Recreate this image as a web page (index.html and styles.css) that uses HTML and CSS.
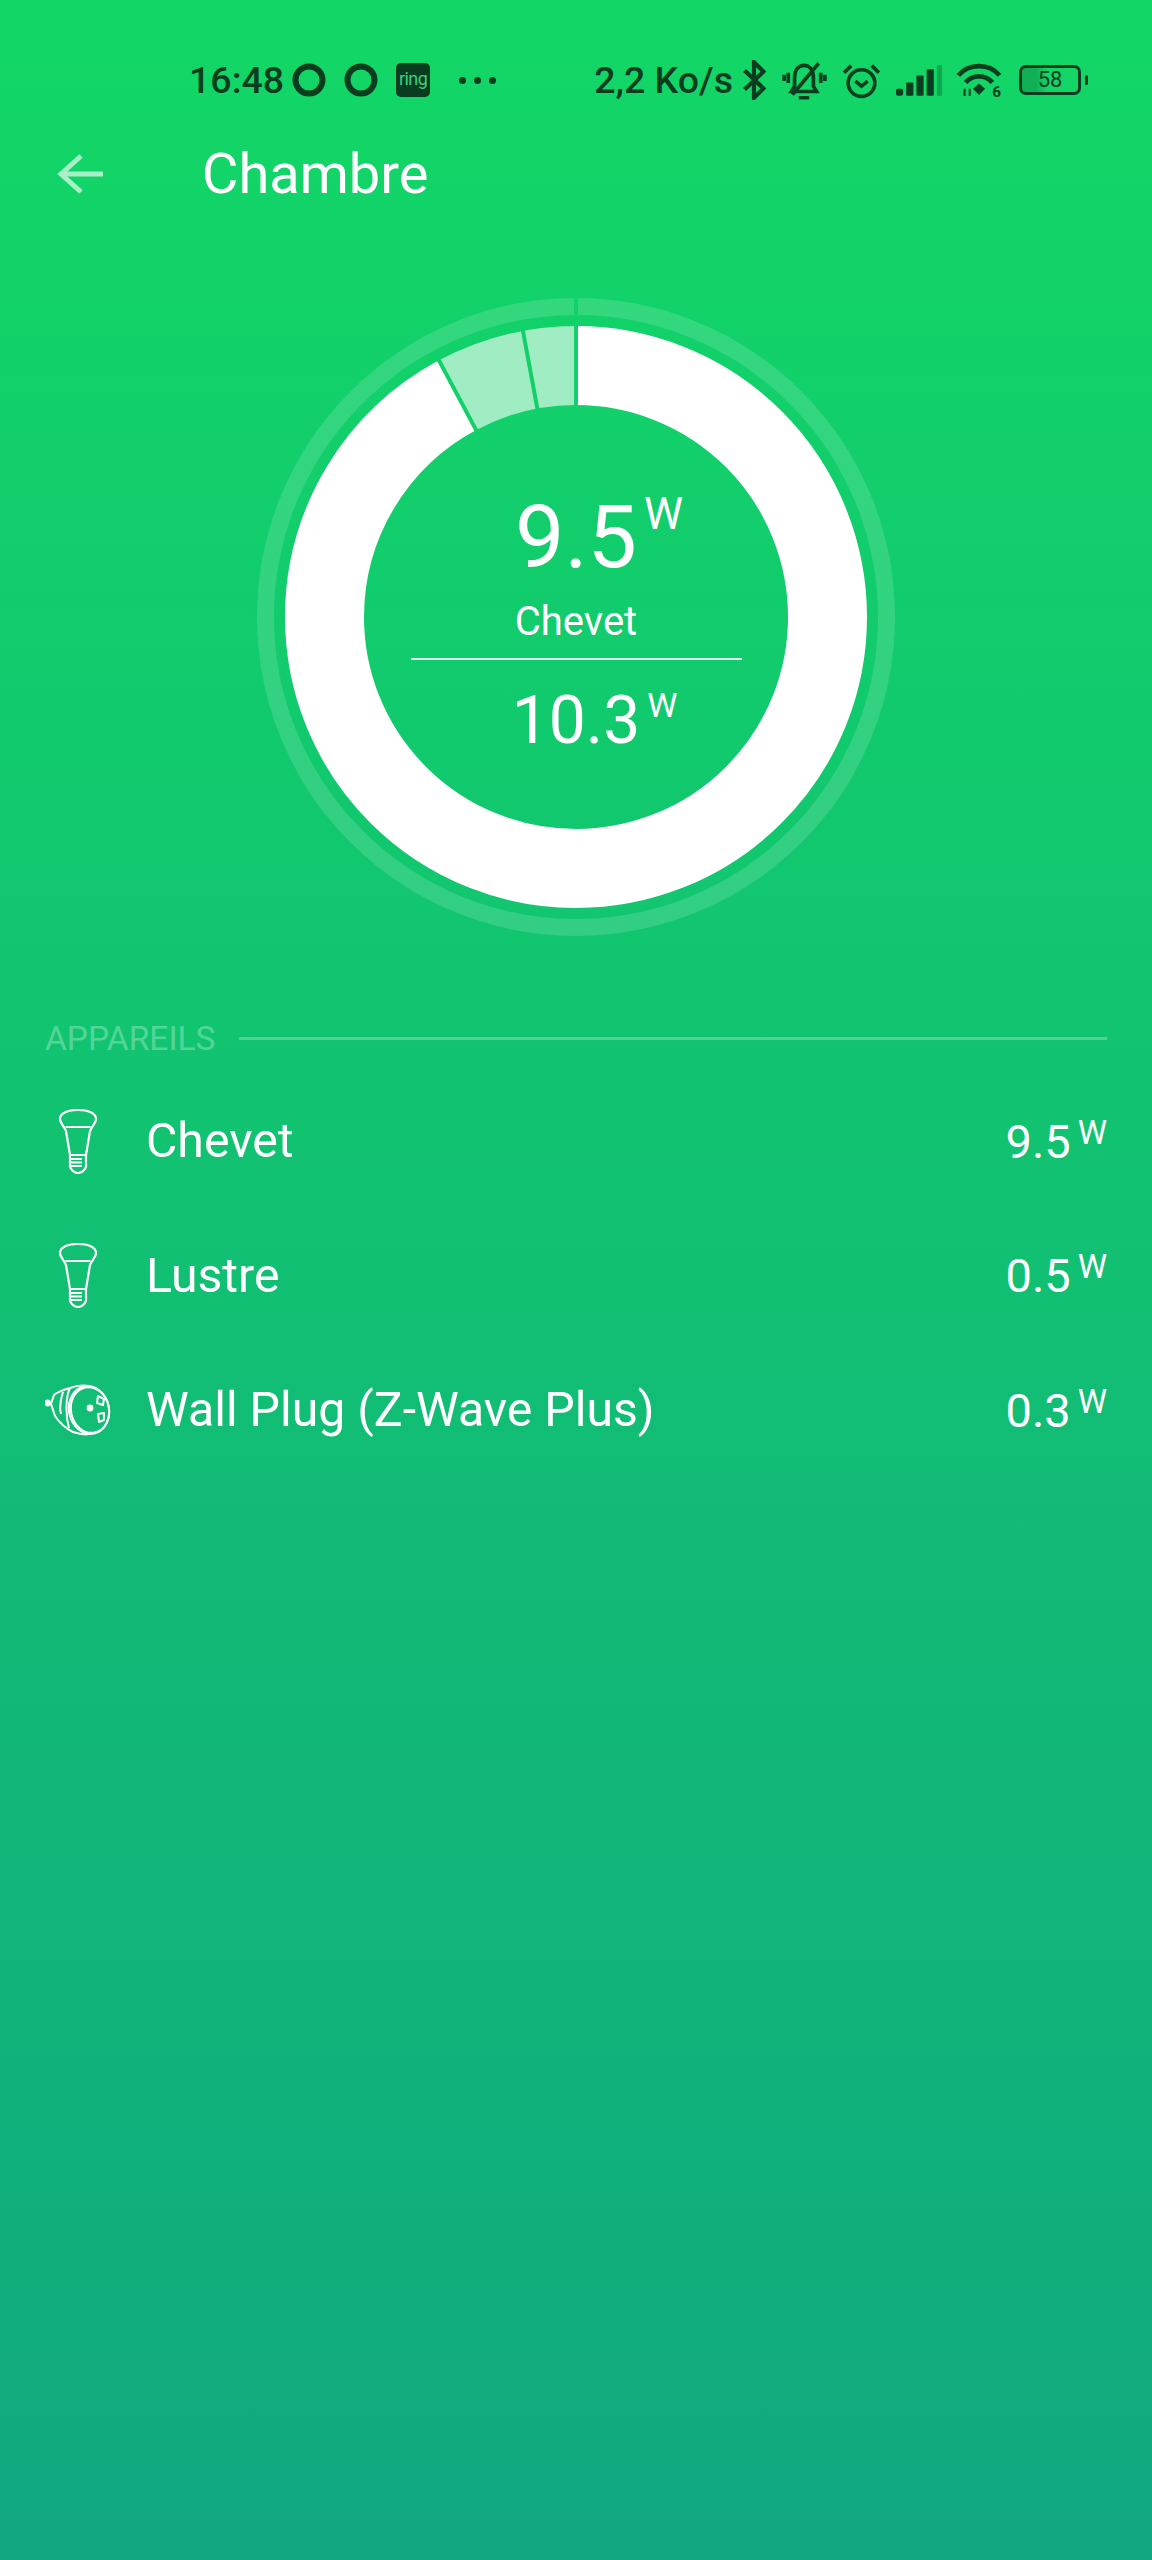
FILE: index.html
```html
<!DOCTYPE html>
<html lang="fr">
<head>
    <meta charset="UTF-8">
    <meta name="viewport" content="width=device-width, initial-scale=1.0">
    <title>Chambre</title>
    <link rel="stylesheet" href="styles.css">
</head>
<body>
    <div class="status-bar">
        <div class="status-left">
            <span class="clock">16:48</span>
            <svg class="status-ring" width="34" height="34" viewBox="0 0 34 34"><circle cx="17" cy="17" r="13.5" fill="none" stroke="#0a3d1f" stroke-width="6"/></svg>
            <svg class="status-ring" width="34" height="34" viewBox="0 0 34 34"><circle cx="17" cy="17" r="13.5" fill="none" stroke="#0a3d1f" stroke-width="6"/></svg>
            <span class="ring-logo">ring</span>
            <span class="status-dots"><i></i><i></i><i></i></span>
        </div>
        <div class="status-right">
            <span class="speed">2,2 Ko/s</span>
            <svg class="bt" width="24" height="40" viewBox="0 0 22 38"><polyline points="2,10 20,27 11,36 11,2 20,11 2,28" fill="none" stroke="#0a3d1f" stroke-width="4"/></svg>
            <svg class="bell" width="45" height="41" viewBox="0 0 43 39" fill="none" stroke="#0a3d1f" stroke-width="3.5">
                <path d="M9 30H33L30 25V17C30 9 26 5 21 5C16 5 12 9 12 17V25Z"/>
                <path d="M16 36H26M10 33L35 3M2 14V20M6 12V22M41 14V20M37 12V22"/>
            </svg>
            <svg class="alarm" width="39" height="37" viewBox="0 0 38 35" fill="none" stroke="#0a3d1f" stroke-width="3.5">
                <circle cx="19" cy="20" r="13"/>
                <path d="M13 18L19 23L25 18M2 10L9 3M36 10L29 3"/>
            </svg>
            <svg class="signal" width="46" height="31" viewBox="0 0 45 30" fill="#0a3d1f">
                <rect x="0" y="23" width="7" height="7" rx="2"/>
                <rect x="10" y="17" width="7" height="13" rx="1"/>
                <rect x="20" y="10" width="7" height="20" rx="1"/>
                <rect x="30" y="4" width="7" height="26" rx="1"/>
                <rect x="40" y="0" width="5" height="30" opacity="0.3"/>
            </svg>
            <svg class="wifi" width="47" height="36" viewBox="0 0 45 35">
                <g fill="none" stroke="#0a3d1f" stroke-width="4.5">
                    <path d="M2 13C12 1 32 1 42 13"/>
                    <path d="M9 20C16 12 28 12 35 20"/>
                </g>
                <path d="M16 26L22 21L28 26L22 32Z" fill="#0a3d1f"/>
                <path d="M8 26V33M13 26V33" stroke="#0a3d1f" stroke-width="2"/>
                <text x="35" y="34" class="wifi-six">6</text>
            </svg>
            <div class="battery"><span class="battery-level">58</span></div>
            <i class="battery-nub"></i>
        </div>
    </div>

    <div class="header">
        <svg class="back" width="46" height="40" viewBox="0 0 46 40" fill="none" stroke="#a8f0c8" stroke-width="5">
            <path d="M46 20H3M24 2L4 20L24 38"/>
        </svg>
        <h1>Chambre</h1>
    </div>

    <div class="gauge">
        <svg width="640" height="640" viewBox="0 0 640 640">
            <defs>
                <mask id="gaps" maskUnits="userSpaceOnUse" x="0" y="0" width="640" height="640">
                    <rect width="640" height="640" fill="white"/>
                    <path d="M320 320V0M320 320L265.3 25M320 320L178.7 55.4" stroke="black" stroke-width="4"/>
                </mask>
            </defs>
            <g mask="url(#gaps)">
                <g fill="none" transform="rotate(-90 320 320)">
                    <circle cx="320" cy="320" r="310.5" stroke="white" stroke-opacity="0.14" stroke-width="17"/>
                    <circle cx="320" cy="320" r="251.5" stroke="white" stroke-width="79" pathLength="360" stroke-dasharray="331.9 28.1"/>
                    <circle cx="320" cy="320" r="251.5" stroke="white" stroke-opacity="0.6" stroke-width="79" pathLength="360" stroke-dasharray="0 331.9 28.1"/>
                </g>
            </g>
        </svg>
        <div class="gauge-text">
            <div class="gauge-value">9.5<span class="gauge-unit">W</span></div>
            <div class="gauge-name">Chevet</div>
            <div class="gauge-line"></div>
            <div class="gauge-total">10.3<span class="gauge-unit small">W</span></div>
        </div>
    </div>

    <div class="section-title">
        <span>APPAREILS</span>
        <div class="section-line"></div>
    </div>

    <div class="device">
        <div class="device-icon">
            <svg width="40" height="66" viewBox="0 0 40 66" fill="none" stroke="white" stroke-width="2.2" stroke-linejoin="round">
                <path d="M2 11C2 5 10 2 20 2C30 2 38 5 38 11C38 15 34 18 32 23L28 47H12L8 23C6 18 2 15 2 11Z"/>
                <path d="M7.5 19H32.5M12 47V59C14 63 17 65 20 65C23 65 26 63 28 59V47M12 51H24M12 54.5H24M12 58H24"/>
            </svg>
        </div>
        <span class="device-name">Chevet</span>
        <span class="device-power">9.5<span class="unit">W</span></span>
    </div>
    <div class="device">
        <div class="device-icon">
            <svg width="40" height="66" viewBox="0 0 40 66" fill="none" stroke="white" stroke-width="2.2" stroke-linejoin="round">
                <path d="M2 11C2 5 10 2 20 2C30 2 38 5 38 11C38 15 34 18 32 23L28 47H12L8 23C6 18 2 15 2 11Z"/>
                <path d="M7.5 19H32.5M12 47V59C14 63 17 65 20 65C23 65 26 63 28 59V47M12 51H24M12 54.5H24M12 58H24"/>
            </svg>
        </div>
        <span class="device-name">Lustre</span>
        <span class="device-power">0.5<span class="unit">W</span></span>
    </div>
    <div class="device">
        <div class="device-icon">
            <svg class="plug" width="68" height="52" viewBox="0 0 68 52" fill="none" stroke="white" stroke-width="2" stroke-linejoin="round">
                <ellipse cx="44" cy="26" rx="20" ry="24" transform="rotate(-12 44 26)"/>
                <ellipse cx="45" cy="26" rx="19" ry="23" transform="rotate(-12 45 26)"/>
                <path d="M44 2C38 1 30 2 25 4C18 6 12 8 9 11L6 20L10 32C14 38 20 44 28 48C34 50 40 51 44 50M18 8C16 14 14 22 16 30M25 4C21 12 20 30 24 44"/>
                <path d="M53 12L59 15L58 21L52 19ZM53 30L59 29L59 36L54 38Z"/>
                <circle cx="45" cy="24" r="2.4" fill="white"/>
                <circle cx="2.5" cy="19" r="2.4" fill="white"/>
            </svg>
        </div>
        <span class="device-name">Wall Plug (Z-Wave Plus)</span>
        <span class="device-power">0.3<span class="unit">W</span></span>
    </div>
</body>
</html>
```
FILE: styles.css
```css
body {
    margin: 0;
    height: 2560px;
    overflow: hidden;
    background: linear-gradient(180deg, #12d766 0%, #11a880 100%);
    color: white;
    font-family: Roboto, "Noto Sans", sans-serif;
}
.status-bar {
    display: flex;
    justify-content: space-between;
    align-items: center;
    height: 64px;
    padding: 48px 64px 0 189px;
    color: #0a3d1f;
}
.status-left,
.status-right {
    display: flex;
    align-items: center;
}
.clock {
    font-size: 37.5px;
    font-weight: 500;
    line-height: 44px;
    margin-right: 8px;
}
.status-ring {
    margin-right: 18px;
}
.ring-logo {
    width: 34px;
    height: 34px;
    background: #0a3d1f;
    border-radius: 5px;
    color: #3fcf7f;
    font-size: 18px;
    line-height: 32px;
    text-align: center;
    letter-spacing: -0.5px;
}
.status-dots {
    display: flex;
    gap: 8px;
    margin-left: 29px;
}
.status-dots i {
    width: 7px;
    height: 7px;
    border-radius: 50%;
    background: #0a3d1f;
}
.speed {
    font-size: 37.5px;
    font-weight: 500;
    line-height: 44px;
    margin-right: 9px;
}
.bt {
    margin-right: 16px;
}
.bell {
    margin-right: 15px;
}
.alarm {
    margin-right: 15px;
}
.signal {
    margin-right: 14px;
}
.wifi {
    margin-right: 16px;
}
.wifi-six {
    font-size: 15px;
    font-weight: bold;
    fill: #0a3d1f;
}
.battery {
    width: 62px;
    height: 30px;
    box-sizing: border-box;
    border: 3px solid #0a3d1f;
    border-radius: 7px;
    background: linear-gradient(90deg, rgba(10,61,31,0.25) 0%, rgba(10,61,31,0.25) 25%, transparent 45%);
    text-align: center;
}
.battery-level {
    display: block;
    font-size: 22px;
    line-height: 24px;
}
.battery-nub {
    width: 3px;
    height: 10px;
    margin-left: 4px;
    background: #0a3d1f;
    border-radius: 2px;
}
.header {
    display: flex;
    align-items: center;
    height: 124px;
    padding-left: 57px;
}
.back {
    margin-right: 99px;
}
h1 {
    margin: 0;
    font-size: 56px;
    font-weight: 400;
}
.gauge {
    position: relative;
    width: 640px;
    height: 640px;
    margin: 61px auto 0;
}
.gauge svg {
    display: block;
}
.gauge-text {
    position: absolute;
    top: 0;
    left: 0;
    right: 0;
    display: flex;
    flex-direction: column;
    align-items: center;
    padding-top: 195px;
}
.gauge-value {
    position: relative;
    font-size: 88px;
    line-height: 90px;
}
.gauge-unit {
    position: absolute;
    left: 100%;
    top: -6px;
    margin-left: 7px;
    font-size: 44px;
    line-height: 56px;
}
.gauge-unit.small {
    top: -6px;
    margin-left: 7px;
    font-size: 34px;
    line-height: 50px;
}
.gauge-name {
    margin-top: 18px;
    font-size: 40px;
    line-height: 44px;
}
.gauge-line {
    width: 331px;
    height: 2px;
    margin-top: 14px;
    background: rgba(255,255,255,0.9);
}
.gauge-total {
    position: relative;
    margin-top: 26px;
    font-size: 66px;
    line-height: 70px;
}
.section-title {
    display: flex;
    align-items: center;
    height: 40px;
    margin: 81px 45px 15.5px;
    color: rgba(255,255,255,0.3);
    font-size: 33.5px;
}
.section-line {
    flex: 1;
    height: 3px;
    margin-left: 24px;
    background: rgba(255,255,255,0.25);
}
.device {
    display: flex;
    align-items: center;
    height: 134.5px;
    padding: 0 45px;
    font-size: 48.2px;
}
.device-icon {
    display: flex;
    justify-content: flex-start;
    width: 101px;
}
.device-icon svg {
    margin-left: 13px;
}
.device-icon .plug {
    margin-left: 0;
}
.device-name {
    flex: 1;
}
.device-power {
    font-size: 47px;
    white-space: nowrap;
}
.unit {
    margin-left: 7px;
    font-size: 33px;
    vertical-align: 14px;
}
```
